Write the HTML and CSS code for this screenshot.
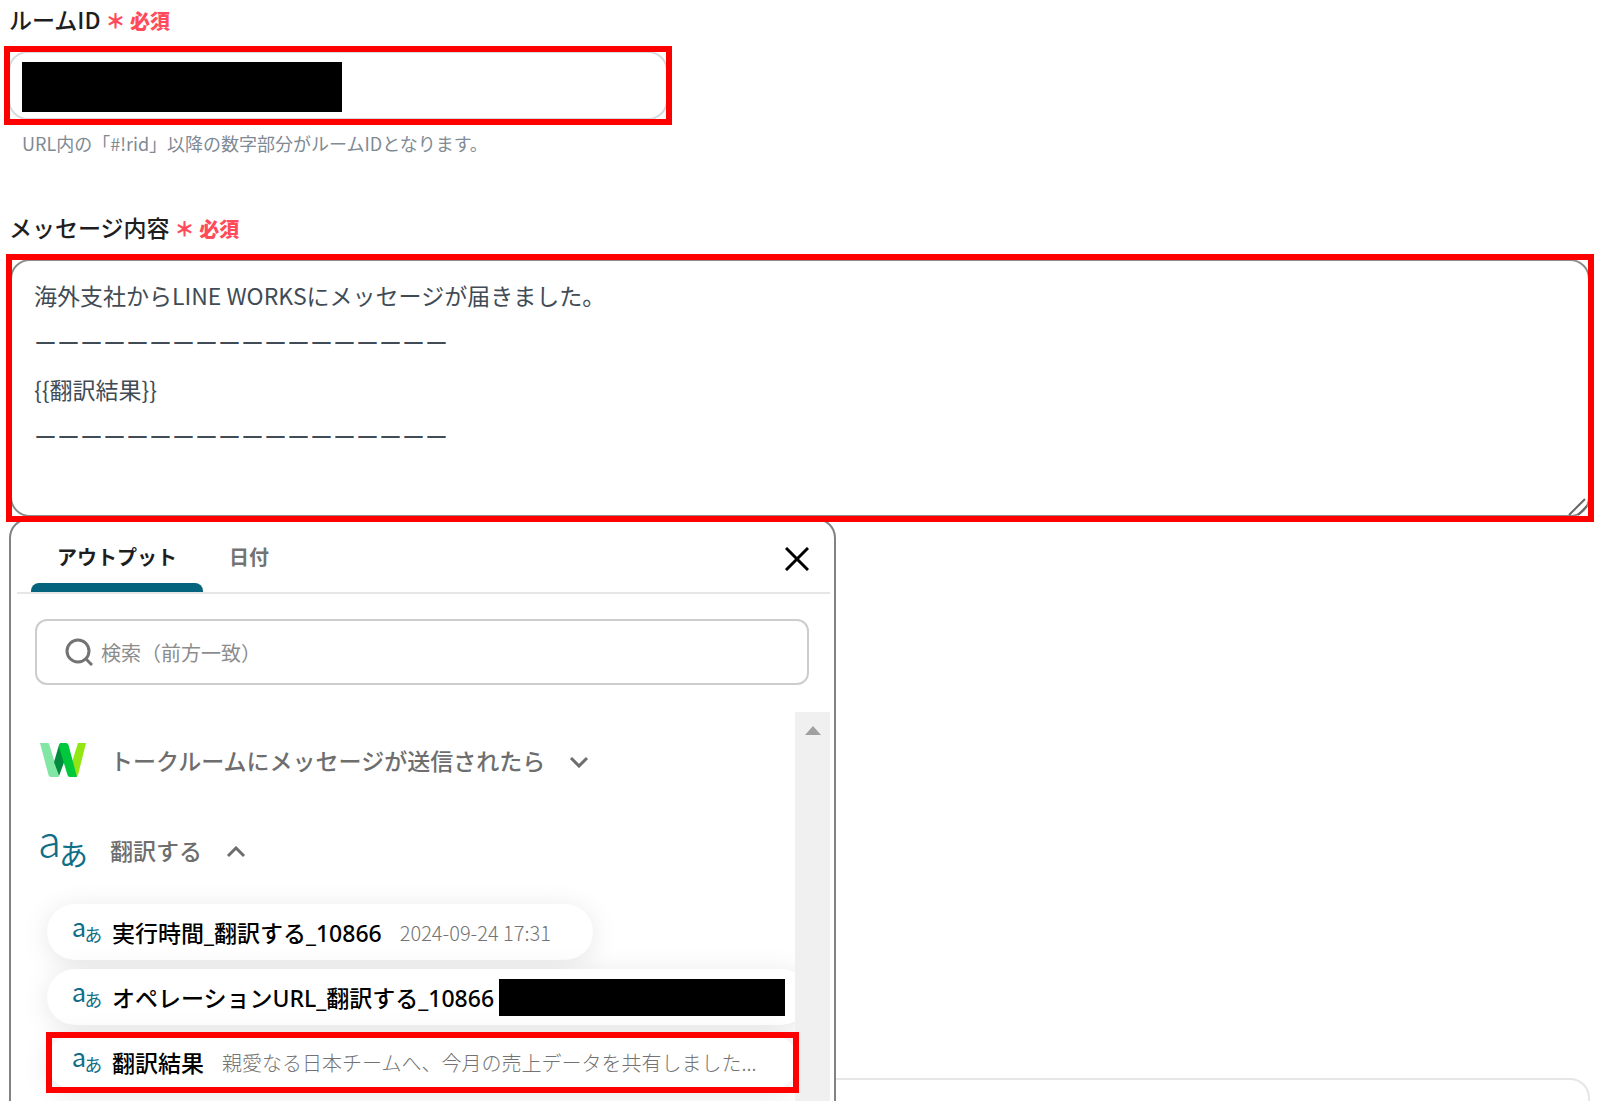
FILE: index.html
```html
<!DOCTYPE html>
<html lang="ja">
<head>
    <meta charset="UTF-8">
    <meta name="viewport" content="width=device-width, initial-scale=1.0">
    <title>メッセージ送信</title>
    <link rel="stylesheet" href="styles.css">
</head>
<body>
    <main class="page">
        <div class="field">
            <label class="label" for="room-id">ルームID<span class="required">＊ 必須</span></label>
            <div class="marked marked-room">
                <input class="room-input" id="room-id" type="text">
                <span class="mask mask-room"></span>
            </div>
            <p class="hint">URL内の「#!rid」以降の数字部分がルームIDとなります。</p>
        </div>

        <div class="field">
            <label class="label" for="message">メッセージ内容<span class="required">＊ 必須</span></label>
            <div class="marked marked-message">
                <textarea class="message-input" id="message" rows="5">海外支社からLINE WORKSにメッセージが届きました。
ーーーーーーーーーーーーーーーーーー
{{翻訳結果}}
ーーーーーーーーーーーーーーーーーー</textarea>
                <svg class="grip" width="20" height="20" viewBox="0 0 20 20"><path d="M1 19 17 3M10 19 19 10"/></svg>
            </div>

            <!-- Output picker -->
            <section class="panel">
                <div class="panel-head">
                    <button class="tab active" type="button">アウトプット</button>
                    <button class="tab" type="button">日付</button>
                    <button class="close" type="button" aria-label="閉じる">
                        <svg width="24" height="24" viewBox="0 0 24 24"><path d="M1 1 23 23M23 1 1 23"/></svg>
                    </button>
                </div>

                <label class="search">
                    <svg width="28" height="28" viewBox="0 0 28 28"><circle cx="13" cy="13" r="11"/><path d="M20 20 27 27"/></svg>
                    <input type="search" placeholder="検索（前方一致）" aria-label="検索">
                </label>

                <div class="panel-body">
                    <div class="list">
                        <button class="group" type="button">
                            <svg class="group-icon" width="46" height="34" viewBox="0 0 46 34">
                                <path fill="#82e6a5" d="M0 0H8Q9 0 9.500 2L19 34H11Q9 34 8.500 32Z"/>
                                <path fill="#91e614" d="M38 0H46L38 32Q37 34 35 34L31 22Z"/>
                                <path fill="#008c3c" d="M14 19 19 2Q20 0 22 0L26 14 19 33Z"/>
                                <path fill="#00c83c" d="M21 0H26Q28 0 28.500 2L37 34H30Q28 34 27.500 32L19 4Q19 0 21 0Z"/>
                            </svg>
                            <span>トークルームにメッセージが送信されたら</span>
                            <svg class="chevron" width="20" height="12" viewBox="0 0 20 12"><path d="M2 2 10 10 18 2"/></svg>
                        </button>
                        <button class="group" type="button">
                            <svg class="group-icon translate" width="46" height="38" viewBox="0 0 46 38"><text class="latin" x="-2" y="26" font-size="42">a</text><text x="19" y="35" font-size="29">あ</text></svg>
                            <span>翻訳する</span>
                            <svg class="chevron" width="20" height="12" viewBox="0 0 20 12"><path d="M2 10 10 2 18 10"/></svg>
                        </button>

                        <div class="chips">
                            <button class="chip" type="button">
                                <svg class="translate" width="28" height="24" viewBox="0 0 46 38"><text x="-2" y="27" font-size="42">a</text><text x="19" y="36" font-size="29">あ</text></svg>
                                <span class="chip-name">実行時間_翻訳する_10866</span>
                                <span class="chip-value">2024-09-24 17:31</span>
                            </button>
                            <button class="chip chip-url" type="button">
                                <svg class="translate" width="28" height="24" viewBox="0 0 46 38"><text x="-2" y="27" font-size="42">a</text><text x="19" y="36" font-size="29">あ</text></svg>
                                <span class="chip-name">オペレーションURL_翻訳する_10866</span>
                                <span class="mask mask-url"></span>
                            </button>
                            <button class="chip" type="button">
                                <svg class="translate" width="28" height="24" viewBox="0 0 46 38"><text x="-2" y="27" font-size="42">a</text><text x="19" y="36" font-size="29">あ</text></svg>
                                <span class="chip-name">翻訳結果</span>
                                <span class="chip-value">親愛なる日本チームへ、今月の売上データを共有しました...</span>
                            </button>
                        </div>
                    </div>
                    <div class="scrollbar">
                        <svg width="16" height="9" viewBox="0 0 16 9"><path d="M0 9 8 0 16 9Z"/></svg>
                    </div>
                    <div class="marker"></div>
                </div>
            </section>
        </div>

        <div class="card"></div>
    </main>
</body>
</html>
```
FILE: styles.css
```css
* {
    margin: 0;
    padding: 0;
    box-sizing: border-box;
}

body {
    font-family: "Noto Sans CJK JP", sans-serif;
    font-size: 23px;
    color: #1e1e1e;
    background: #fff;
}

button, input, textarea {
    font: inherit;
    color: inherit;
    border: 0;
    background: none;
    outline: 0;
}

svg {
    flex: none;
    fill: none;
}

.page {
    height: 100vh;
    overflow: hidden;
    padding: 2px 6px 0;
}

/* Form fields */
.field {
    position: relative;
}

.label {
    display: block;
    padding-left: 3px;
    margin-bottom: 10px;
    line-height: 34px;
    font-weight: 500;
}

.required {
    margin-left: 5px;
    font-size: 20px;
    font-weight: 900;
    line-height: 20px;
    color: #ff4b5a;
}

.marked {
    position: relative;
    z-index: 2;
    display: flex;
    overflow: hidden;
    border: 6px solid #f00;
    background: #fff;
}

.marked-room {
    max-width: 668px;
    height: 79px;
    margin-left: -2px;
}

.room-input {
    flex: 1;
    margin: -1px -2px;
    border: 2px solid #d5dade;
    border-radius: 20px;
}

.mask {
    background: #000;
}

.mask-room {
    position: absolute;
    left: 12px;
    top: 10px;
    width: 320px;
    height: 50px;
}

.hint {
    margin: 3px 0 52px;
    padding-left: 16px;
    font-size: 18px;
    line-height: 30px;
    color: #808a94;
}

.marked-message {
    height: 268px;
}

.message-input {
    flex: 1;
    margin: -1px -2px;
    padding: 11px 22px;
    border: 2px solid #8c8c8c;
    border-radius: 20px;
    line-height: 47px;
    color: #414b55;
    resize: none;
    overflow: hidden;
}

.grip {
    position: absolute;
    right: 0;
    bottom: 0;
    stroke: #666;
    stroke-width: 2;
}

/* Output picker */
.panel {
    position: absolute;
    z-index: 1;
    top: 100%;
    left: 3px;
    display: flex;
    flex-direction: column;
    width: 100%;
    max-width: 827px;
    height: 640px;
    margin-top: -4px;
    border: 2px solid #828282;
    border-radius: 20px;
    background: #fff;
}

.panel-head {
    display: flex;
    height: 74px;
    margin: 0 4px 0 6px;
    padding: 6px 21px 0 14px;
    border-bottom: 2px solid #e6e6e6;
}

.tab {
    position: relative;
    padding: 0 26px;
    border-bottom: 5px solid transparent;
    font-size: 20px;
    font-weight: 700;
    color: #737373;
}

.tab.active {
    color: #1e1e1e;
}

.tab.active::after {
    content: "";
    position: absolute;
    left: 0;
    right: 0;
    bottom: -5px;
    height: 9px;
    border-radius: 8px 8px 0 0;
    background: #05647d;
}

.close {
    display: flex;
    align-items: center;
    margin-left: auto;
    stroke: #000;
    stroke-width: 3;
}

.search {
    display: flex;
    align-items: center;
    gap: 8px;
    height: 66px;
    margin: 25px 25px 27px 24px;
    padding: 0 28px;
    border: 2px solid #cdcdcd;
    border-radius: 12px;
    stroke: #737373;
    stroke-width: 3;
}

.search input {
    flex: 1;
    font-size: 20px;
}

.search input::placeholder {
    color: #8c8c8c;
}

.panel-body {
    position: relative;
    display: flex;
    flex: 1;
    min-height: 0;
    margin-right: 4px;
}

.list {
    flex: 1;
    min-width: 0;
    overflow: hidden;
    padding-top: 3px;
}

.group {
    display: flex;
    align-items: center;
    height: 90px;
    padding-left: 29px;
    font-weight: 500;
    color: #6e6e6e;
}

.group-icon {
    margin-right: 24px;
}

.chevron {
    margin: 4px 0 0 24px;
    stroke: #6e6e6e;
    stroke-width: 3;
}

.translate {
    fill: #0f6e87;
    font-weight: 400;
    overflow: visible;
}

.latin {
    font-weight: 300;
}

.chips {
    display: flex;
    flex-direction: column;
    align-items: flex-start;
    gap: 9px;
    padding: 9px 0 20px 36px;
}

.chip {
    display: flex;
    align-items: center;
    height: 56px;
    padding: 0 42px 0 26px;
    border-radius: 28px;
    background: #fff;
    box-shadow: 0 4px 28px rgba(0, 0, 0, 0.1);
    white-space: nowrap;
}

.chip-name {
    margin-left: 11px;
    font-family: "Noto Sans", "Noto Sans CJK JP", sans-serif;
    font-weight: 500;
    color: #000;
}

.chip-value {
    margin-left: 18px;
    font-size: 20px;
    font-weight: 300;
    color: #737373;
}

.chip-url {
    padding-right: 24px;
}

.mask-url {
    width: 286px;
    height: 37px;
    margin-left: 5px;
}

.scrollbar {
    display: flex;
    justify-content: center;
    width: 35px;
    padding-top: 14px;
    background: #f0f0f0;
    fill: #a0a0a0;
}

.scrollbar svg {
    fill: inherit;
}

.marker {
    position: absolute;
    top: 320px;
    left: 35px;
    right: 31px;
    height: 61px;
    border: 6px solid #f00;
}

/* Next block of the form */
.card {
    height: 200px;
    margin: 556px 4px 0 3px;
    border: 2px solid #e6e6e6;
    border-radius: 20px;
}
```
